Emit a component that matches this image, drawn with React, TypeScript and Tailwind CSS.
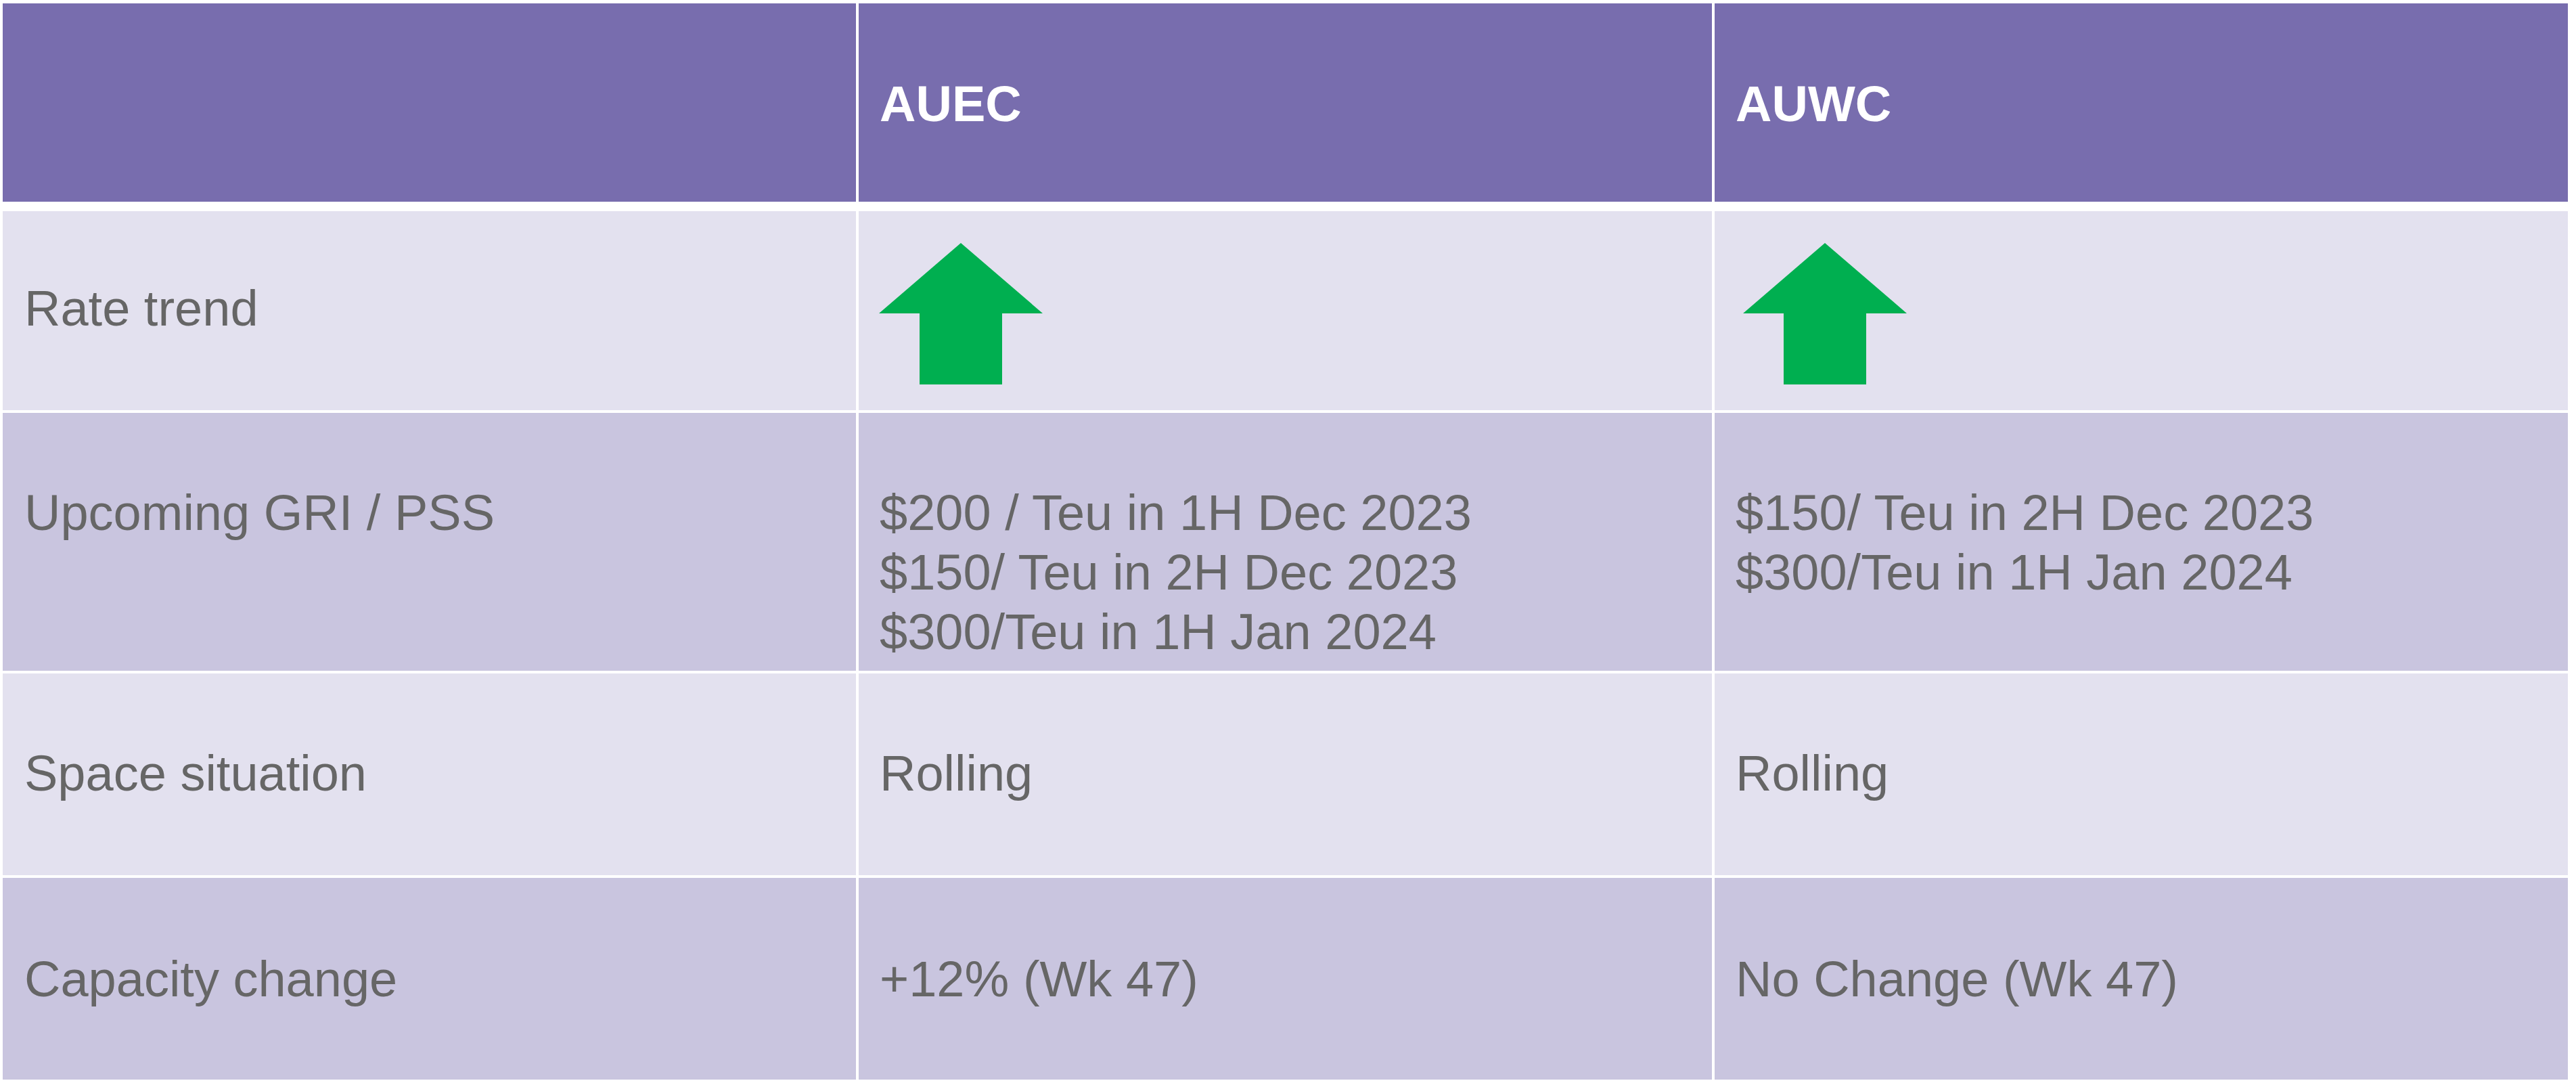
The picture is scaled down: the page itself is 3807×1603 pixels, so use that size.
import React from "react";

type Row = {
  label: string;
  height: string;
  pad: string;
  bg: string;
  cells: React.ReactNode[];
};

const UpArrow = () => (
  <svg width="242" height="209" viewBox="0 0 242 209" className="block">
    <polygon
      points="121,0 242,104 182,104 182,209 60,209 60,104 0,104"
      fill="#00AF50"
    />
  </svg>
);

const rows: Row[] = [
  {
    label: "Rate trend",
    height: "h-[294px]",
    pad: "pt-[100px]",
    bg: "bg-[#E3E1EF]",
    cells: [
      <div className="pt-[47px] pl-[30px]">
        <UpArrow />
      </div>,
      <div className="pt-[47px] pl-[42px]">
        <UpArrow />
      </div>,
    ],
  },
  {
    label: "Upcoming GRI / PSS",
    height: "h-[381px]",
    pad: "pt-[104px]",
    bg: "bg-[#C9C5DF]",
    cells: [
      <div className="pt-[104px] pl-[31px]">
        <p>$200 / Teu in 1H Dec 2023</p>
        <p>$150/ Teu in 2H Dec 2023</p>
        <p>$300/Teu in 1H Jan 2024</p>
      </div>,
      <div className="pt-[104px] pl-[31px]">
        <p>$150/ Teu in 2H Dec 2023</p>
        <p>$300/Teu in 1H Jan 2024</p>
      </div>,
    ],
  },
  {
    label: "Space situation",
    height: "h-[298px]",
    pad: "pt-[104px]",
    bg: "bg-[#E3E1EF]",
    cells: [
      <div className="pt-[104px] pl-[31px]">Rolling</div>,
      <div className="pt-[104px] pl-[31px]">Rolling</div>,
    ],
  },
  {
    label: "Capacity change",
    height: "h-[298px]",
    pad: "pt-[106px]",
    bg: "bg-[#C9C5DF]",
    cells: [
      <div className="pt-[106px] pl-[31px]">+12% (Wk 47)</div>,
      <div className="pt-[106px] pl-[31px]">No Change (Wk 47)</div>,
    ],
  },
];

export default function App() {
  return (
    <div className="min-h-screen bg-white pt-[5px] pl-[4px] [font-family:'Liberation_Sans',Arial,sans-serif] text-[74px] leading-[88px]">
      <div className="w-[3791px]">
        {/* header */}
        <div className="grid grid-cols-3 gap-x-[4px] h-[293px] mb-[14px]">
          <div className="bg-[#786DAE]" />
          <div className="bg-[#786DAE] pt-[105px] pl-[31px] font-bold text-white">
            AUEC
          </div>
          <div className="bg-[#786DAE] pt-[105px] pl-[31px] font-bold text-white">
            AUWC
          </div>
        </div>

        <div className="flex flex-col gap-y-[4px]">
          {rows.map((row) => (
            <div
              key={row.label}
              className={`grid grid-cols-3 gap-x-[4px] text-[#666666] ${row.height}`}
            >
              <div className={`${row.bg} ${row.pad} pl-[32px]`}>{row.label}</div>
              {row.cells.map((cell, i) => (
                <div key={i} className={row.bg}>
                  {cell}
                </div>
              ))}
            </div>
          ))}
        </div>
      </div>
    </div>
  );
}
